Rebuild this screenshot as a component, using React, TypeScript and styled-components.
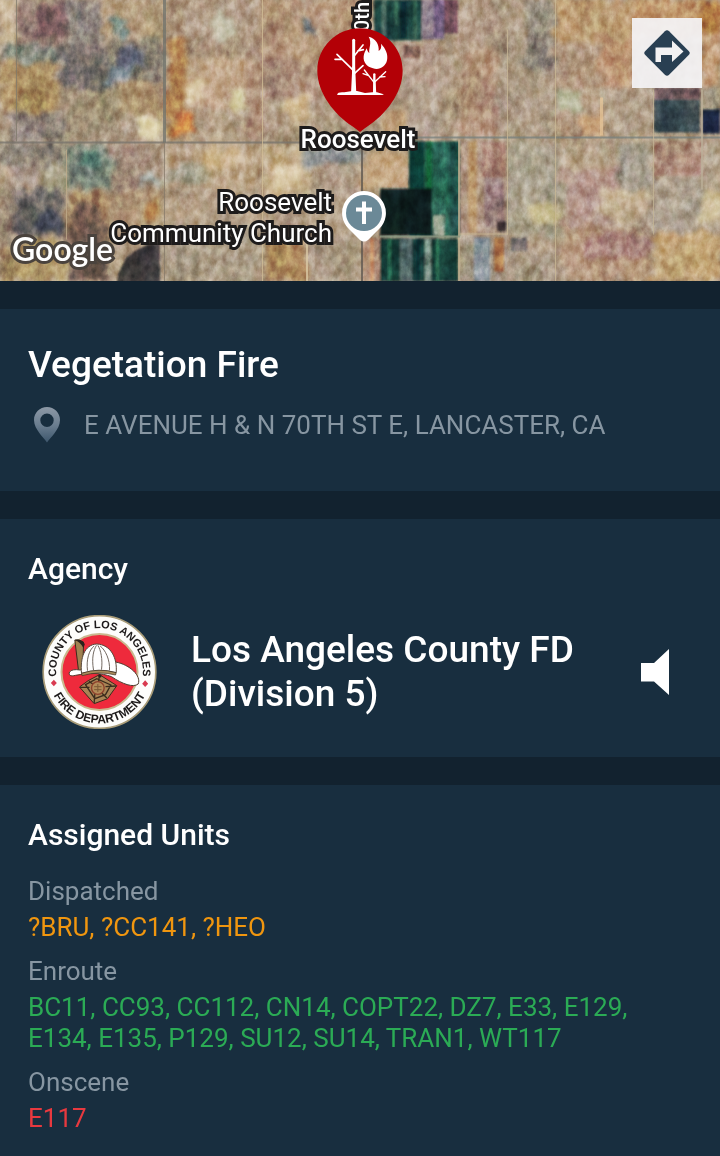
import styled, {createGlobalStyle} from 'styled-components'

type Patch = [number, number, number, number, string]

const FIELDS: Patch[] = [
    // west
    [0, 0, 17, 46, '#c9b592'],
    [17, 0, 50, 56, '#93796d'],
    [34, 4, 30, 32, '#755558'],
    [66, 0, 36, 48, '#8d8178'],
    [102, 0, 62, 40, '#b69c7c'],
    [112, 18, 14, 22, '#7e9188'],
    [0, 46, 60, 18, '#84877a'],
    [0, 64, 56, 44, '#a98a5c'],
    [0, 92, 17, 14, '#d3b27b'],
    [62, 46, 48, 44, '#756b68'],
    [110, 40, 54, 50, '#8b806f'],
    [118, 48, 28, 20, '#585b68'],
    [106, 66, 24, 18, '#7f8b93'],
    [62, 88, 62, 54, '#a08e73'],
    [8, 114, 56, 28, '#8d7f75'],
    [120, 82, 44, 34, '#a68b66'],
    [140, 117, 22, 22, '#ddd2ac'],
    [0, 144, 66, 24, '#8d8274'],
    [10, 164, 28, 22, '#a99889'],
    [40, 166, 28, 24, '#a9a184'],
    [14, 190, 50, 46, '#6b6461'],
    [38, 214, 26, 20, '#454657'],
    [0, 188, 14, 60, '#97846c'],
    [68, 146, 44, 42, '#7e8578'],
    [80, 152, 20, 14, '#4f7469'],
    [112, 146, 52, 50, '#a38b78'],
    [68, 192, 40, 44, '#a17f5d'],
    [108, 192, 56, 50, '#ab9071'],
    [138, 177, 26, 8, '#b0b4ae'],
    [145, 198, 14, 24, '#bb8552'],
    [0, 248, 17, 34, '#9b7f59'],
    [17, 240, 50, 42, '#b39a66'],
    // middle
    [166, 0, 96, 58, '#ab927b'],
    [212, 16, 22, 24, '#c4c0a8'],
    [262, 0, 98, 60, '#b29275'],
    [305, 18, 8, 18, '#7d8387'],
    [168, 40, 18, 100, '#b28250'],
    [176, 112, 18, 26, '#d18045'],
    [186, 60, 60, 50, '#c0a385'],
    [186, 82, 18, 18, '#d8c7a3'],
    [230, 90, 20, 20, '#d8cfa5'],
    [246, 60, 18, 80, '#ae8d75'],
    [264, 60, 54, 40, '#a98a76'],
    [286, 96, 26, 28, '#cbb188'],
    [166, 146, 96, 44, '#b9a080'],
    [166, 168, 44, 16, '#a9a189'],
    [206, 148, 34, 22, '#ccb28a'],
    [264, 146, 46, 50, '#c5ad88'],
    [274, 168, 30, 20, '#d5c39d'],
    [304, 146, 56, 20, '#929594'],
    [166, 190, 96, 92, '#b59e84'],
    [164, 226, 96, 56, '#a8987f'],
    [264, 238, 44, 44, '#ae885c'],
    [308, 238, 52, 44, '#ad9a83'],
    [308, 166, 52, 60, '#b19c83'],
    // east
    [404, 44, 30, 40, '#b79c8b'],
    [408, 84, 36, 52, '#b19e8b'],
    [384, 108, 26, 28, '#b9976f'],
    [362, 152, 46, 38, '#c1a27a'],
    [458, 0, 40, 52, '#ae957e'],
    [460, 52, 46, 86, '#b39179'],
    [498, 0, 56, 138, '#aa967e'],
    [526, 0, 28, 70, '#918679'],
    [556, 0, 82, 42, '#bd9b70'],
    [556, 42, 44, 96, '#b3977d'],
    [600, 40, 32, 48, '#be9572'],
    [702, 0, 18, 38, '#b77f47'],
    [632, 0, 70, 38, '#bf9568'],
    [702, 38, 18, 52, '#c39c76'],
    [556, 92, 24, 22, '#b3b394'],
    [580, 114, 24, 22, '#cda67c'],
    [604, 88, 50, 48, '#ae9a83'],
    [700, 88, 20, 22, '#a0957f'],
    [508, 142, 52, 94, '#aa9f8a'],
    [529, 206, 30, 17, '#ccbf95'],
    [460, 236, 46, 46, '#a89886'],
    [508, 252, 50, 30, '#a5947f'],
    [562, 142, 86, 34, '#b8a386'],
    [618, 144, 34, 52, '#a19788'],
    [562, 170, 56, 66, '#b5978a'],
    [600, 190, 48, 32, '#c5b090'],
    [562, 228, 90, 54, '#b29275'],
    [586, 232, 66, 26, '#a57d74'],
    [654, 176, 48, 60, '#aa9c89'],
    [704, 142, 16, 50, '#b3a38b'],
    [702, 192, 18, 30, '#cdbc94'],
    [654, 232, 66, 50, '#c3a376'],
]

// plots with straight edges
const PLOTS: Patch[] = [
    [374, 0, 48, 41, '#1c3f3e'],
    [382, 0, 4, 38, '#4d6a62'],
    [395, 0, 3, 26, '#3b6a58'],
    [400, 2, 7, 37, '#0f2a30'],
    [413, 0, 4, 40, '#2d5a4b'],
    [422, 0, 22, 40, '#93808c'],
    [434, 0, 10, 38, '#7d6483'],
    [444, 0, 14, 34, '#6b4751'],
    [404, 46, 16, 13, '#7c5850'],
    [409, 142, 51, 95, '#22594a'],
    [409, 142, 15, 48, '#0f4038'],
    [426, 142, 6, 48, '#17653a'],
    [440, 142, 6, 95, '#2b6b56'],
    [450, 142, 8, 95, '#1c4a43'],
    [434, 216, 10, 20, '#93a08a'],
    [380, 189, 52, 47, '#0a1f1e'],
    [362, 239, 18, 43, '#b08d77'],
    [370, 239, 4, 43, '#c98f66'],
    [380, 239, 78, 43, '#173d39'],
    [388, 239, 3, 43, '#2f7358'],
    [400, 239, 12, 43, '#596c66'],
    [416, 239, 4, 43, '#0e2f2e'],
    [425, 239, 6, 43, '#75887e'],
    [436, 239, 3, 43, '#2c6a52'],
    [460, 142, 46, 92, '#ab917b'],
    [468, 142, 9, 92, '#b9966b'],
    [482, 142, 24, 36, '#a67f71'],
    [484, 178, 20, 50, '#987c77'],
    [497, 222, 9, 10, '#4b3b39'],
    [474, 238, 16, 44, '#929aa0'],
    [494, 238, 10, 34, '#b1794d'],
    [511, 238, 16, 14, '#69645e'],
    [654, 142, 48, 34, '#ae8c78'],
    [654, 88, 46, 12, '#6c5357'],
    [654, 100, 46, 33, '#3a4850'],
    [702, 110, 18, 24, '#1d263f'],
]

const ROADS: Patch[] = [
    [0, 142, 300, 2, '#77736c'],
    [414, 137, 306, 2, '#77807d'],
    [163, 0, 3, 143, '#6f716b'],
    [164, 143, 1, 139, '#85796a'],
    [361, 144, 2, 138, '#5b544e'],
    [66, 150, 1, 90, '#c0ac8c'],
    [16, 0, 1, 142, '#7f7a6b'],
    [262, 0, 1, 282, '#d1bd97'],
    [306, 228, 2, 54, '#dccba7'],
    [458, 140, 2, 142, '#c3b291'],
    [507, 30, 1, 205, '#c9b897'],
    [555, 0, 1, 282, '#cbb996'],
    [600, 98, 3, 38, '#e5c699'],
    [653, 90, 1, 145, '#c4b596'],
    [701, 90, 2, 100, '#bcb09a'],
    [380, 236, 80, 2, '#8c9a83'],
    [460, 234, 48, 1, '#c9b795'],
]

const UNIT_GROUPS = [
    {status: 'Dispatched', color: '#f0960f', units: '?BRU, ?CC141, ?HEO'},
    {
        status: 'Enroute',
        color: '#2bab55',
        units: 'BC11, CC93, CC112, CN14, COPT22, DZ7, E33, E129, E134, E135, P129, SU12, SU14, TRAN1, WT117',
    },
    {status: 'Onscene', color: '#e8393f', units: 'E117'},
]

export default function App() {
    return (
        <Page>
            <GlobalStyle />
            <MapArea>
                <Terrain />
                <StreetLabel>0th</StreetLabel>
                <IncidentPin />
                <TownLabel>Roosevelt</TownLabel>
                <ChurchLabel>
                    Roosevelt
                    <br />
                    Community Church
                </ChurchLabel>
                <ChurchPin />
                <GoogleMark>Google</GoogleMark>
                <DirectionsButton type="button" aria-label="Directions">
                    <svg width="46" height="46" viewBox="0 0 46 46">
                        <path
                            d="M20.9 1.3a3 3 0 0 1 4.2 0L44.7 20.900a3 3 0 0 1 0 4.200L25.100 44.700a3 3 0 0 1-4.200 0L1.300 25.100a3 3 0 0 1 0-4.200z"
                            fill="#293f52"
                        />
                        <path d="M11.500 32V17.500H28V10.500L39.500 21.500L28 32V25H17V32z" fill="#f3f2f3" />
                    </svg>
                </DirectionsButton>
            </MapArea>

            <Section $bottom={48}>
                <IncidentTitle>Vegetation Fire</IncidentTitle>
                <AddressRow>
                    <svg width="26" height="36" viewBox="0 0 26 36">
                        <defs>
                            <linearGradient id="address" x1="0" y1="0" x2="0" y2="1">
                                <stop offset="0" stopColor="#8d99a6" />
                                <stop offset="0.5" stopColor="#6b7e90" />
                                <stop offset="1" stopColor="#3d566c" />
                            </linearGradient>
                        </defs>
                        <path
                            d="M13 0C5.800 0 0 5.800 0 13c0 5 2.500 9 5.500 13.300C8 29.800 11 32.500 13 35.500c2-3 5-5.700 7.500-9.200C23.500 22 26 18 26 13C26 5.800 20.200 0 13 0zm0 6.500a6.700 6.700 0 1 1 0 13.400a6.700 6.700 0 0 1 0-13.400z"
                            fill="url(#address)"
                        />
                    </svg>
                    <Address>E AVENUE H &amp; N 70TH ST E, LANCASTER, CA</Address>
                </AddressRow>
            </Section>

            <Section $bottom={28}>
                <SectionTitle>Agency</SectionTitle>
                <AgencyRow>
                    <Seal />
                    <AgencyName>Los Angeles County FD (Division 5)</AgencyName>
                    <SpeakerButton type="button" aria-label="Listen">
                        <svg width="28" height="46" viewBox="0 0 28 46">
                            <path d="M0 14H13L28 0V46L13 32.500H0z" fill="#fff" />
                        </svg>
                    </SpeakerButton>
                </AgencyRow>
            </Section>

            <Section $bottom={22}>
                <SectionTitle>Assigned Units</SectionTitle>
                <UnitList>
                    {UNIT_GROUPS.map((group) => (
                        <UnitGroup key={group.status}>
                            <UnitStatus>{group.status}</UnitStatus>
                            <Units $color={group.color}>{group.units}</Units>
                        </UnitGroup>
                    ))}
                </UnitList>
            </Section>
        </Page>
    )
}

function Terrain() {
    return (
        <TerrainSvg viewBox="0 0 720 282" preserveAspectRatio="xMidYMid slice" aria-hidden="true">
            <defs>
                <filter id="rough" x="0" y="0" width="100%" height="100%" colorInterpolationFilters="sRGB">
                    <feTurbulence type="fractalNoise" baseFrequency="0.07" numOctaves="4" seed="4" result="n" />
                    <feDisplacementMap
                        in="SourceGraphic"
                        in2="n"
                        scale="20"
                        xChannelSelector="R"
                        yChannelSelector="G"
                        result="d"
                    />
                    <feGaussianBlur in="d" stdDeviation="2" />
                </filter>
                <filter id="soft" x="0" y="0" width="100%" height="100%">
                    <feGaussianBlur stdDeviation="0.8" />
                </filter>
                <filter id="grain" x="0" y="0" width="100%" height="100%" colorInterpolationFilters="sRGB">
                    <feTurbulence type="fractalNoise" baseFrequency="0.13 0.09" numOctaves="4" seed="11" />
                    <feColorMatrix values="1.5 0.5 0 0 -0.48  1.3 0.7 0 0 -0.46  1.2 0.6 0.2 0 -0.45  0 0 0 0 1" />
                </filter>
                <filter id="mottle" x="0" y="0" width="100%" height="100%" colorInterpolationFilters="sRGB">
                    <feTurbulence type="fractalNoise" baseFrequency="0.035 0.025" numOctaves="3" seed="7" />
                    <feColorMatrix values="2 0 0 0 -0.5  1.6 0.4 0 0 -0.5  1.5 0 0.5 0 -0.5  0 0 0 0 1" />
                </filter>
            </defs>
            <g filter="url(#rough)">
                <rect x="-20" y="-20" width="760" height="322" fill="#b09a80" />
                {FIELDS.map(([x, y, w, h, color]) => (
                    <rect key={`${x}-${y}-${w}`} x={x} y={y} width={w} height={h} fill={color} />
                ))}
                <path d="M0 80C14 58 46 60 58 84C66 104 56 112 34 112L0 108z" fill="#a98b5e" />
                <path d="M70 282V222C76 196 100 200 108 236V282z" fill="#6f574d" />
            </g>
            <g filter="url(#soft)">
                {PLOTS.map(([x, y, w, h, color]) => (
                    <rect key={`${x}-${y}-${w}`} x={x} y={y} width={w} height={h} fill={color} />
                ))}
                <path d="M116 290C118 258 136 246 160 243V290z" fill="#403a3b" />
            </g>
            <rect width="720" height="282" filter="url(#mottle)" style={{mixBlendMode: 'soft-light'}} opacity="0.25" />
            <rect width="720" height="282" filter="url(#grain)" style={{mixBlendMode: 'overlay'}} opacity="0.32" />
            {ROADS.map(([x, y, w, h, color]) => (
                <rect key={`${x}-${y}`} x={x} y={y} width={w} height={h} fill={color} opacity="0.75" />
            ))}
        </TerrainSvg>
    )
}

function IncidentPin() {
    return (
        <IncidentPinSvg width="86" height="104" viewBox="52 85 258 312" aria-hidden="true">
            <path
                d="M181 86C110 86 53 143 53 213C53 280 105 345 158 380Q172 390 181 397Q190 390 204 380C257 345 309 280 309 213C309 143 252 86 181 86z"
                fill="#b30006"
            />
            <g fill="none" stroke="#fff" strokeLinecap="round" strokeLinejoin="round">
                <path d="M162 280V122" strokeWidth="9" />
                <path d="M161 212L112 164M128 179L106 179M164 222L190 198M164 168L190 136M174 154L191 150" strokeWidth="5" />
                <path d="M224 280V224" strokeWidth="7" />
                <path d="M223 248L194 211M207 228L190 222M226 246L258 216M240 232L256 231" strokeWidth="4" />
            </g>
            <path d="M154 282L158 200H166L170 282zM220 282L222 240H227L230 282z" fill="#fff" />
            <path d="M112 285Q114 276 134 278L158 274H172L196 280L218 278H232L252 284Q252 286 246 286H116z" fill="#fff" />
            <path
                d="M207 111C228 116 239 134 237 154C244 150 246 142 244 132C258 147 266 164 262 182C258 202 238 212 220 206C202 202 190 188 192 170C193 160 197 154 201 146C203 153 205 158 209 160C206 146 218 130 207 111z"
                fill="#fff"
            />
        </IncidentPinSvg>
    )
}

function ChurchPin() {
    return (
        <ChurchPinSvg width="46" height="52" viewBox="0 0 46 52" aria-hidden="true">
            <path d="M23 1a22 22 0 0 1 16 37L27 50Q23 53 19 50L7 38A22 22 0 0 1 23 1z" fill="#fff" />
            <circle cx="23" cy="23" r="18" fill="#6b8997" />
            <path d="M21 11.500h4v6h6v4h-6V34h-4V21.500h-6v-4h6z" fill="#fff" />
        </ChurchPinSvg>
    )
}

function Seal() {
    return (
        <SealSvg width="115" height="114" viewBox="36 31 344 342" role="img" aria-label="County of Los Angeles Fire Department">
            <defs>
                <path id="sealTop" d="M79 216A130 130 0 1 1 337 216" />
                <path id="sealBottom" d="M54 202A154 154 0 0 0 362 202" />
            </defs>
            <circle cx="208" cy="202" r="169" fill="#fdfdfb" stroke="#a99c78" strokeWidth="5" />
            <circle cx="208" cy="202" r="114" fill="#ee2a3c" stroke="#c9b98f" strokeWidth="6" />
            <SealText $size={33} textAnchor="middle">
                <textPath href="#sealTop" startOffset="50%">
                    COUNTY OF LOS ANGELES
                </textPath>
            </SealText>
            <SealText $size={36} textAnchor="middle">
                <textPath href="#sealBottom" startOffset="50%">
                    FIRE DEPARTMENT
                </textPath>
            </SealText>
            <path d="M71 225l9 10l-9 10l-9-10zM345 227l9 10l-9 10l-9-10z" fill="#d93a50" />
            <path d="M134 106Q148 104 160 112L158 206H146Z" fill="#a08251" stroke="#3a2b1c" strokeWidth="3" />
            <path d="M134 106Q150 100 164 118L160 130Q150 112 134 106z" fill="#2b211c" />
            <path
                d="M118 202C114 212 122 216 136 212C180 204 212 204 244 216C276 238 310 250 324 238C334 214 300 180 256 172L150 196Q126 192 118 202z"
                fill="#fff"
                stroke="#4c3a2c"
                strokeWidth="3"
            />
            <path
                d="M154 206C150 160 162 120 200 118C242 120 262 160 258 204Q208 190 154 206z"
                fill="#fff"
                stroke="#57473a"
                strokeWidth="3"
            />
            <path
                d="M172 198C168 166 176 136 192 124M190 196C184 160 190 136 199 122M214 195C218 164 212 136 203 122M238 197C240 166 226 136 210 124"
                fill="none"
                stroke="#736a62"
                strokeWidth="3"
            />
            <path d="M154 206Q206 188 258 204L256 211Q206 198 156 213z" fill="#a98b5c" stroke="#3a2b1c" strokeWidth="2" />
            <path d="M208 210L260 243L232 282L192 297L148 247L174 228z" fill="#a98455" stroke="#3a2b1c" strokeWidth="3" />
            <path
                d="M208 212L205 232M258 244L226 246M230 280L214 264M192 295L194 268M150 248L178 248M176 230L188 238M166 240L200 222L242 241L226 270L194 282z"
                fill="none"
                stroke="#3a2b1c"
                strokeWidth="4"
            />
            <circle cx="203" cy="250" r="19" fill="#b28a58" stroke="#8d3f2b" strokeWidth="4" />
            <path d="M192 246H214M192 255H214M203 238V262" stroke="#7c5a35" strokeWidth="3" />
            <circle cx="209" cy="214" r="5" fill="#2b211c" />
        </SealSvg>
    )
}

const GlobalStyle = createGlobalStyle`
    * {
        box-sizing: border-box;
    }

    body {
        margin: 0;
        background: #182e3f;
        font-family: Roboto, 'Liberation Sans', sans-serif;
    }

    h1, h2, h3, p {
        margin: 0;
    }
`

const Page = styled.main`
    display: flex;
    flex-direction: column;
    gap: 28px;
    background: #12222f;
`

const MapArea = styled.div`
    position: relative;
    height: 281px;
    overflow: hidden;
`

const TerrainSvg = styled.svg`
    display: block;
    width: 100%;
    height: 100%;
`

const MapLabel = styled.span`
    position: absolute;
    color: #fff;
    font-size: 26px;
    line-height: 31px;
    white-space: nowrap;
    -webkit-text-stroke: 6px #1d1b1b;
    paint-order: stroke fill;
`

const StreetLabel = styled(MapLabel)`
    top: 2px;
    left: calc(50% + 2px);
    font-size: 20px;
    font-weight: 500;
    line-height: 24px;
    writing-mode: vertical-rl;
    transform: translateX(-50%) rotate(180deg);
`

const TownLabel = styled(MapLabel)`
    top: 124px;
    left: calc(50% - 2px);
    font-weight: 500;
    transform: translateX(-50%);
`

const ChurchLabel = styled(MapLabel)`
    top: 187px;
    right: calc(50% + 28px);
    text-align: right;
`

const GoogleMark = styled(MapLabel)`
    bottom: 12px;
    left: 12px;
    font-family: Lato, Roboto, sans-serif;
    font-size: 32px;
    font-weight: 600;
    line-height: 40px;
    -webkit-text-stroke-color: #4a433d;
`

const IncidentPinSvg = styled.svg`
    position: absolute;
    top: 28px;
    left: 50%;
    transform: translateX(-50%);
`

const ChurchPinSvg = styled.svg`
    position: absolute;
    top: 190px;
    left: calc(50% - 19px);
`

const DirectionsButton = styled.button`
    position: absolute;
    top: 18px;
    right: 18px;
    display: flex;
    align-items: center;
    justify-content: center;
    width: 70px;
    height: 70px;
    padding: 0;
    border: none;
    background: rgba(244, 243, 245, 0.93);
    cursor: pointer;
`

const Section = styled.section<{$bottom: number}>`
    padding: 33px 28px ${(props) => props.$bottom}px;
    background: #182e3f;
`

const IncidentTitle = styled.h1`
    color: #fff;
    font-size: 37px;
    font-weight: 500;
    line-height: 46px;
`

const AddressRow = styled.div`
    display: flex;
    align-items: center;
    gap: 24px;
    margin-top: 19px;
    padding-left: 6px;
`

const Address = styled.p`
    color: #8796a2;
    font-size: 26px;
    line-height: 31px;
`

const SectionTitle = styled.h2`
    color: #fff;
    font-size: 30px;
    font-weight: 500;
    line-height: 34px;
`

const AgencyRow = styled.div`
    display: flex;
    align-items: center;
    gap: 34px;
    margin-top: 29px;
    padding: 0 23px 0 14px;
`

const SealSvg = styled.svg`
    flex-shrink: 0;
`

const SealText = styled.text<{$size: number}>`
    fill: #1d1a1a;
    font-family: 'Liberation Sans', sans-serif;
    font-size: ${(props) => props.$size}px;
    font-weight: 700;
`

const AgencyName = styled.h3`
    flex: 1;
    color: #fff;
    font-size: 37px;
    font-weight: 500;
    line-height: 44px;
`

const SpeakerButton = styled.button`
    display: flex;
    padding: 0;
    border: none;
    background: none;
    cursor: pointer;
`

const UnitList = styled.div`
    display: flex;
    flex-direction: column;
    gap: 13px;
    margin-top: 24px;
`

const UnitGroup = styled.div`
    display: flex;
    flex-direction: column;
    gap: 5px;
`

const UnitStatus = styled.h3`
    color: #8796a2;
    font-size: 26px;
    font-weight: 400;
    line-height: 31px;
`

const Units = styled.p<{$color: string}>`
    color: ${(props) => props.$color};
    font-size: 26px;
    line-height: 31px;
`
